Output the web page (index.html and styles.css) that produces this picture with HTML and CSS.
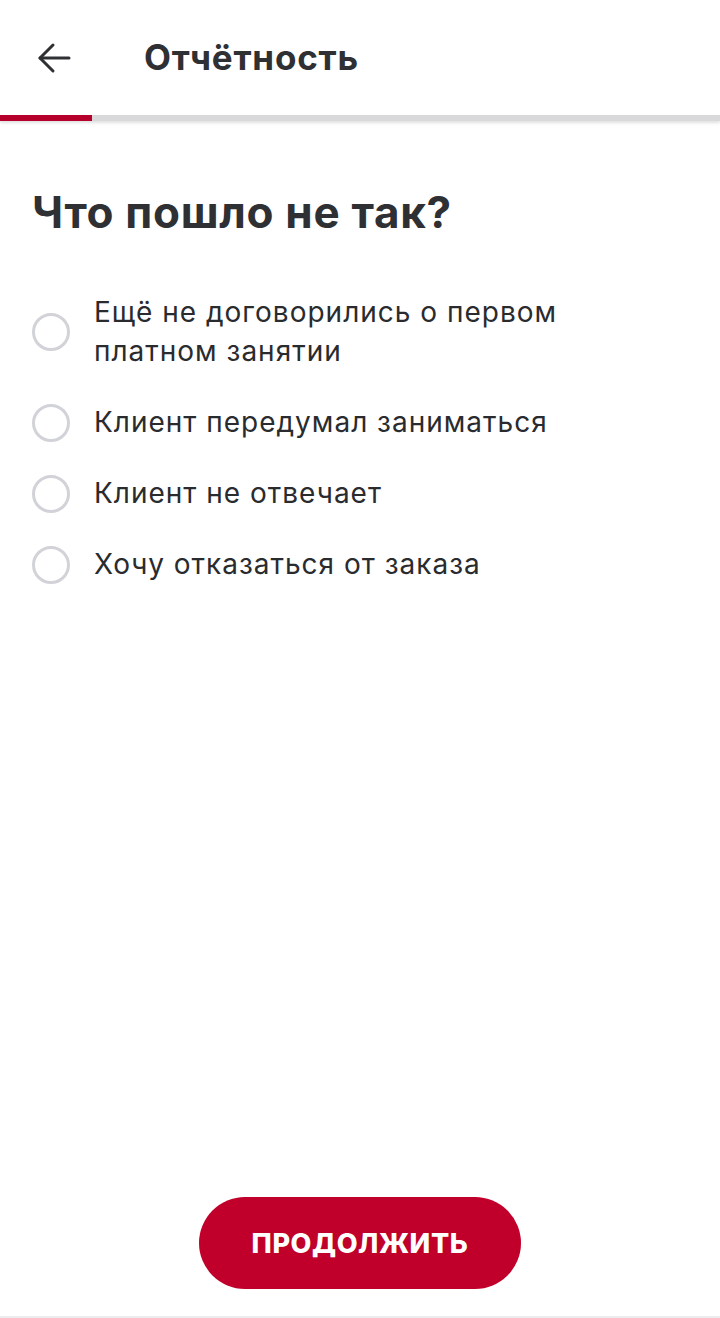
FILE: index.html
```html
<!DOCTYPE html>
<html lang="ru">
<head>
    <meta charset="utf-8">
    <title>Отчётность</title>
    <link rel="stylesheet" href="styles.css">
</head>
<body>
    <div class="screen">
        <header class="topbar">
            <button class="back" aria-label="Назад">
                <svg width="36" height="36" viewBox="0 0 36 36" fill="none" stroke="#2f3033" stroke-width="3" stroke-linecap="round" stroke-linejoin="round">
                    <path d="M33 18H4"/>
                    <path d="M17 5L4 18l13 13"/>
                </svg>
            </button>
            <h1>Отчётность</h1>
        </header>

        <div class="progress">
            <div class="progress-fill"></div>
        </div>

        <main class="content">
            <h2>Что пошло не так?</h2>

            <div class="options">
                <label class="option">
                    <span class="radio"></span>
                    <span class="option-text">Ещё не договорились о первом платном занятии</span>
                </label>
                <label class="option">
                    <span class="radio"></span>
                    <span class="option-text">Клиент передумал заниматься</span>
                </label>
                <label class="option">
                    <span class="radio"></span>
                    <span class="option-text">Клиент не отвечает</span>
                </label>
                <label class="option">
                    <span class="radio"></span>
                    <span class="option-text">Хочу отказаться от заказа</span>
                </label>
            </div>
        </main>

        <footer class="bottom">
            <button class="continue">ПРОДОЛЖИТЬ</button>
        </footer>
    </div>
</body>
</html>
```

FILE: styles.css
```css
:root {
    --text: #2f3033;
    --red: #c0002a;
    --radio: #d2d3d8;
}

* {
    box-sizing: border-box;
}

body {
    margin: 0;
    background: #fff;
    font-family: 'Inter', 'Noto Sans', sans-serif;
    color: var(--text);
}

.screen {
    display: flex;
    flex-direction: column;
    height: 1318px;
    border-bottom: 2px solid #ececee;
}

.topbar {
    display: flex;
    align-items: center;
    height: 115px;
    padding: 0 0 0 36px;
}

.back {
    display: flex;
    padding: 0;
    border: none;
    background: none;
    width: 36px;
    height: 36px;
    margin-right: 72px;
    cursor: pointer;
}

.topbar h1 {
    margin: 0;
    font-size: 35px;
    font-weight: 700;
    letter-spacing: 0.8px;
    padding-bottom: 2px;
}

.progress {
    height: 6px;
    background: #d9d9dc;
    box-shadow: 0 2px 3px rgba(0,0,0,0.12);
}

.progress-fill {
    width: 92px;
    height: 100%;
    background: #b4002a;
}

.content {
    flex: 1;
    padding: 62px 32px 0;
}

.content h2 {
    margin: 0 0 52px;
    font-size: 44px;
    font-weight: 700;
    line-height: 58px;
    letter-spacing: 0.7px;
}

.options {
    display: flex;
    flex-direction: column;
    gap: 32px;
}

.option {
    display: flex;
    align-items: center;
    gap: 24px;
    cursor: pointer;
}

.radio {
    flex: none;
    width: 38px;
    height: 38px;
    border: 3px solid var(--radio);
    border-radius: 50%;
}

.option-text {
    font-size: 28px;
    line-height: 39px;
    letter-spacing: 1px;
    max-width: 500px;
    color: #2a2b2e;
}

.bottom {
    display: flex;
    justify-content: center;
    padding-bottom: 27px;
}

.continue {
    width: 322px;
    height: 92px;
    border: none;
    border-radius: 46px;
    background: var(--red);
    color: #fff;
    font-family: 'Inter', 'Noto Sans', sans-serif;
    font-size: 27px;
    font-weight: 800;
    letter-spacing: 0.6px;
    cursor: pointer;
}
```
